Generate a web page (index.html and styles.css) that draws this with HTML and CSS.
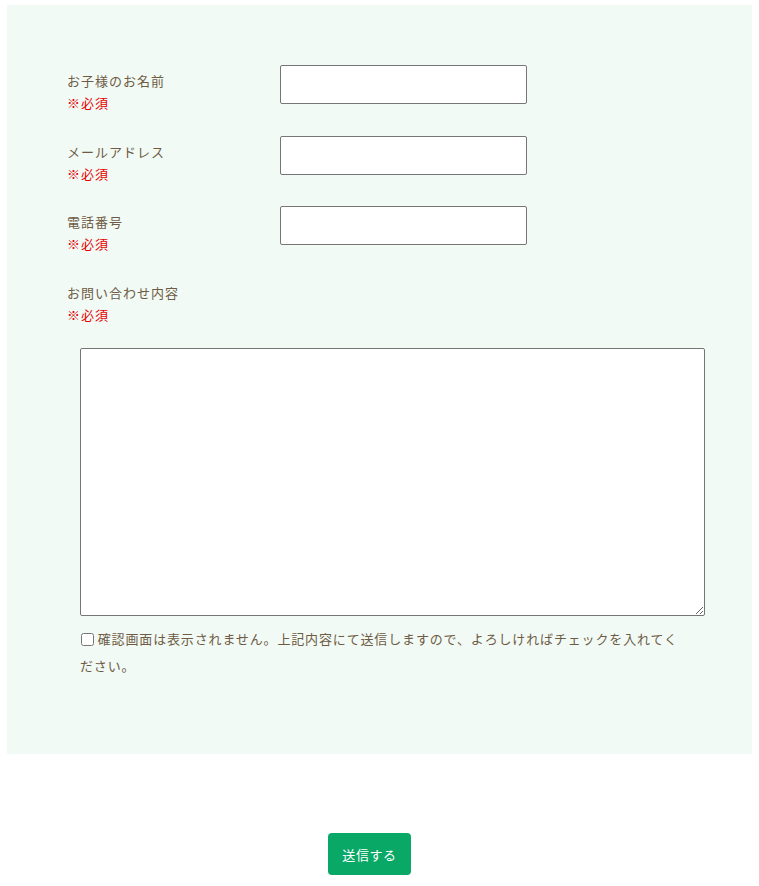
FILE: index.html
```html
<!DOCTYPE html>
<html lang="ja">
<head>
<meta charset="utf-8">
<title>お問い合わせ</title>
<link rel="stylesheet" href="styles.css">
</head>
<body>
<div class="page">
  <form class="panel">
    <div class="row">
      <div class="label"><span>お子様のお名前</span><span class="req">※必須</span></div>
      <input class="field" type="text">
    </div>
    <div class="row">
      <div class="label"><span>メールアドレス</span><span class="req">※必須</span></div>
      <input class="field" type="email">
    </div>
    <div class="row">
      <div class="label"><span>電話番号</span><span class="req">※必須</span></div>
      <input class="field" type="tel">
    </div>
    <div class="row row-block">
      <div class="label"><span>お問い合わせ内容</span><span class="req">※必須</span></div>
    </div>
    <textarea class="message"></textarea>
    <label class="confirm"><input class="check" type="checkbox"> 確認画面は表示されません。上記内容にて送信しますので、よろしければチェックを入れてください。</label>
  </form>
  <div class="actions">
    <button class="submit" type="button">送信する</button>
  </div>
</div>
</body>
</html>
```
FILE: styles.css
```css
* { box-sizing: border-box; }
html, body { margin: 0; padding: 0; background: #fff; }
body {
  font-family: "Noto Sans CJK JP", "Noto Sans", sans-serif;
  color: #6f5b44;
  font-size: 13px;
}
.page { padding: 5px 7px 0; width: 759px; }
.panel {
  background: #f1faf5;
  width: 745px;
  padding: 60px 47px 75px 60px;
}
.row {
  display: flex;
  align-items: flex-start;
  height: 70.7px;
}
.row-block { height: 71px; }
.label {
  width: 213px;
  padding-top: 5px;
  display: flex;
  flex-direction: column;
  line-height: 22px;
  letter-spacing: 1px;
}
.req { color: #e60000; }
.field {
  width: 247px;
  height: 39px;
  border: 1px solid #767676;
  border-radius: 2px;
  background: #fff;
  margin: 0;
}
.message {
  display: block;
  margin: 0 0 9px 13px;
  width: 625px;
  height: 268px;
  border: 1px solid #767676;
  border-radius: 2px;
  background: #fff;
  resize: both;
}
.confirm {
  display: block;
  margin-left: 13px;
  width: 610px;
  line-height: 27px;
  letter-spacing: 0.85px;
}
.check {
  width: 13px;
  height: 13px;
  margin: 0 0 0 1px;
  vertical-align: -2px;
}
.actions {
  padding: 79px 0 0 321px;
}
.submit {
  font-family: "Noto Sans CJK JP", sans-serif;
  background: #0aa866;
  color: #fff;
  border: none;
  border-radius: 4px;
  width: 83px;
  height: 42px;
  font-size: 13px;
  letter-spacing: 0.6px;
  padding: 0;
}
```
